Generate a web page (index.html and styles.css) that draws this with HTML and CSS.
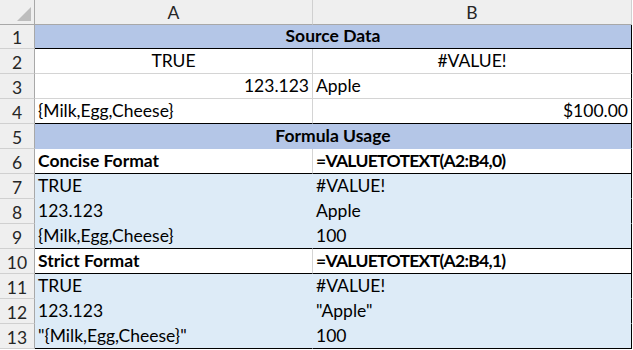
FILE: index.html
```html
<!DOCTYPE html>
<html>
<head>
<meta charset="utf-8">
<link rel="stylesheet" href="styles.css">
</head>
<body>
<div class="sheet">
  <div class="corner"><svg class="tri" width="14" height="14" viewBox="0 0 14 14"><polygon points="0,14 14,14 14,0" fill="#bdbdbd"/></svg></div>
  <div class="colhead">A</div>
  <div class="colhead">B</div>

  <div class="rowhead r1">1</div>
  <div class="cell merged band r1 thickb">Source Data</div>

  <div class="rowhead">2</div>
  <div class="cell center">TRUE</div>
  <div class="cell center edge">#VALUE!</div>

  <div class="rowhead">3</div>
  <div class="cell right">123.123</div>
  <div class="cell edge">Apple</div>

  <div class="rowhead">4</div>
  <div class="cell thickb">{Milk,Egg,Cheese}</div>
  <div class="cell right edge thickb">$100.00</div>

  <div class="rowhead">5</div>
  <div class="cell merged band nob">Formula Usage</div>

  <div class="rowhead">6</div>
  <div class="cell bold thickb">Concise Format</div>
  <div class="cell bold formula edge thickb">=VALUETOTEXT(A2:B4,0)</div>

  <div class="rowhead">7</div>
  <div class="cell fill">TRUE</div>
  <div class="cell fill edge">#VALUE!</div>

  <div class="rowhead">8</div>
  <div class="cell fill">123.123</div>
  <div class="cell fill edge">Apple</div>

  <div class="rowhead">9</div>
  <div class="cell fill thickb">{Milk,Egg,Cheese}</div>
  <div class="cell fill edge thickb">100</div>

  <div class="rowhead">10</div>
  <div class="cell bold thickb">Strict Format</div>
  <div class="cell bold formula edge thickb">=VALUETOTEXT(A2:B4,1)</div>

  <div class="rowhead">11</div>
  <div class="cell fill">TRUE</div>
  <div class="cell fill edge">#VALUE!</div>

  <div class="rowhead">12</div>
  <div class="cell fill">123.123</div>
  <div class="cell fill edge">"Apple"</div>

  <div class="rowhead">13</div>
  <div class="cell fill thickb">"{Milk,Egg,Cheese}"</div>
  <div class="cell fill edge thickb">100</div>
</div>
</body>
</html>
```

FILE: styles.css
```css
html, body {
  margin: 0;
  padding: 0;
  background: #ffffff;
}

.sheet {
  display: grid;
  grid-template-columns: 35px 278px 319px;
  grid-template-rows: 25px 24px repeat(12, 25px);
  font-family: Lato, "Open Sans", sans-serif;
  font-size: 17.5px;
  color: #000;
}

.corner,
.colhead,
.rowhead {
  box-sizing: border-box;
  background: #efefef;
  color: #262626;
  display: flex;
  align-items: center;
  justify-content: center;
}

.corner {
  border-right: 1px solid #a8a8a8;
  border-bottom: 1px solid #a8a8a8;
  position: relative;
}

.tri {
  position: absolute;
  right: 3px;
  bottom: 3px;
}

.colhead {
  border-right: 1px solid #d0d0d0;
  border-bottom: 1px solid #a8a8a8;
  padding-top: 1px;
}

.rowhead {
  border-right: 1px solid #a8a8a8;
  border-bottom: 1px solid #d0d0d0;
  padding-top: 2px;
}

.cell {
  box-sizing: border-box;
  border-right: 1px solid #d4d4d4;
  border-bottom: 1px solid #d4d4d4;
  padding: 0 3px 2px 3px;
  display: flex;
  align-items: flex-end;
  white-space: nowrap;
  overflow: hidden;
  line-height: 20px;
}

.edge {
  border-right: 1px solid #000;
}

.center { justify-content: center; }
.right { justify-content: flex-end; }
.bold { font-weight: bold; }

.formula {
  letter-spacing: -0.7px;
}

.merged {
  grid-column: span 2;
  justify-content: center;
  border-right: 1px solid #000;
}

.band {
  background: #b4c6e7;
  font-weight: bold;
}

.nob {
  border-bottom: 1px solid #b4c6e7;
}

.fill {
  background: #ddebf7;
  border-bottom-color: #ddebf7;
  border-right-color: #ddebf7;
}

.fill.edge {
  border-right-color: #000;
}

.thickb {
  border-bottom: 1px solid #000;
}
```
